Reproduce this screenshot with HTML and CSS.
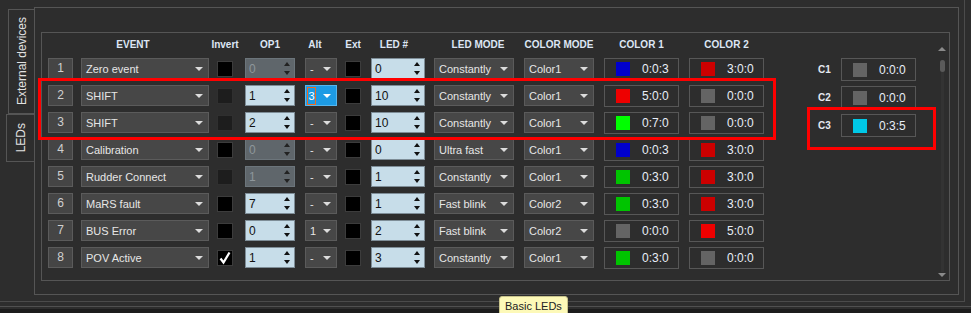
FILE: index.html
```html
<!DOCTYPE html>
<html lang="en">
<head>
    <meta charset="UTF-8">
    <meta name="viewport" content="width=device-width, initial-scale=1.0">
    <title>LEDs</title>
    <link rel="stylesheet" href="styles.css">
</head>
<body>
<div class="app">
    <div class="frame">
        <div class="tabs">
            <div class="tab tab-ext"><span>External devices</span></div>
            <div class="tab tab-leds"><span>LEDs</span></div>
        </div>

        <div class="panel">
            <div class="inner">
                <div class="table">
                    <div class="head">
                        <div class="c-num"></div>
                        <div class="c-event h-event">EVENT</div>
                        <div class="c-inv h-wide">Invert</div>
                        <div class="c-op">OP1</div>
                        <div class="c-alt h-alt">Alt</div>
                        <div class="c-ext">Ext</div>
                        <div class="c-led h-led">LED #</div>
                        <div class="c-mode h-mode">LED MODE</div>
                        <div class="c-cmode h-wide">COLOR MODE</div>
                        <div class="c-col">COLOR 1</div>
                        <div class="c-col">COLOR 2</div>
                    </div>

                    <div class="rows">
                        <div class="row">
                            <div class="c-num num">1</div>
                            <div class="c-event combo">Zero event<i></i></div>
                            <div class="c-inv"><div class="check"></div></div>
                            <div class="c-op spin off">0<b><i></i><i></i></b></div>
                            <div class="c-alt combo">-<i></i></div>
                            <div class="c-ext"><div class="check"></div></div>
                            <div class="c-led spin">0<b><i></i><i></i></b></div>
                            <div class="c-mode combo">Constantly<i></i></div>
                            <div class="c-cmode combo">Color1<i></i></div>
                            <div class="c-col colbox"><span class="sw blue"></span>0:0:3</div>
                            <div class="c-col colbox"><span class="sw red"></span>3:0:0</div>
                        </div>
                        <div class="row">
                            <div class="c-num num">2</div>
                            <div class="c-event combo">SHIFT<i></i></div>
                            <div class="c-inv"><div class="check dis"></div></div>
                            <div class="c-op spin">1<b><i></i><i></i></b></div>
                            <div class="c-alt combo hot"><em>3</em><i></i></div>
                            <div class="c-ext"><div class="check"></div></div>
                            <div class="c-led spin">10<b><i></i><i></i></b></div>
                            <div class="c-mode combo">Constantly<i></i></div>
                            <div class="c-cmode combo">Color1<i></i></div>
                            <div class="c-col colbox"><span class="sw red-hi"></span>5:0:0</div>
                            <div class="c-col colbox"><span class="sw gray"></span>0:0:0</div>
                        </div>
                        <div class="row">
                            <div class="c-num num">3</div>
                            <div class="c-event combo">SHIFT<i></i></div>
                            <div class="c-inv"><div class="check dis"></div></div>
                            <div class="c-op spin">2<b><i></i><i></i></b></div>
                            <div class="c-alt combo">-<i></i></div>
                            <div class="c-ext"><div class="check"></div></div>
                            <div class="c-led spin">10<b><i></i><i></i></b></div>
                            <div class="c-mode combo">Constantly<i></i></div>
                            <div class="c-cmode combo">Color1<i></i></div>
                            <div class="c-col colbox"><span class="sw green-hi"></span>0:7:0</div>
                            <div class="c-col colbox"><span class="sw gray"></span>0:0:0</div>
                        </div>
                        <div class="row">
                            <div class="c-num num">4</div>
                            <div class="c-event combo">Calibration<i></i></div>
                            <div class="c-inv"><div class="check"></div></div>
                            <div class="c-op spin off">0<b><i></i><i></i></b></div>
                            <div class="c-alt combo">-<i></i></div>
                            <div class="c-ext"><div class="check"></div></div>
                            <div class="c-led spin">0<b><i></i><i></i></b></div>
                            <div class="c-mode combo">Ultra fast<i></i></div>
                            <div class="c-cmode combo">Color1<i></i></div>
                            <div class="c-col colbox"><span class="sw blue"></span>0:0:3</div>
                            <div class="c-col colbox"><span class="sw red"></span>3:0:0</div>
                        </div>
                        <div class="row">
                            <div class="c-num num">5</div>
                            <div class="c-event combo">Rudder Connect<i></i></div>
                            <div class="c-inv"><div class="check dis"></div></div>
                            <div class="c-op spin off">1<b><i></i><i></i></b></div>
                            <div class="c-alt combo">-<i></i></div>
                            <div class="c-ext"><div class="check"></div></div>
                            <div class="c-led spin">1<b><i></i><i></i></b></div>
                            <div class="c-mode combo">Constantly<i></i></div>
                            <div class="c-cmode combo">Color1<i></i></div>
                            <div class="c-col colbox"><span class="sw green"></span>0:3:0</div>
                            <div class="c-col colbox"><span class="sw red"></span>3:0:0</div>
                        </div>
                        <div class="row">
                            <div class="c-num num">6</div>
                            <div class="c-event combo">MaRS fault<i></i></div>
                            <div class="c-inv"><div class="check"></div></div>
                            <div class="c-op spin">7<b><i></i><i></i></b></div>
                            <div class="c-alt combo">-<i></i></div>
                            <div class="c-ext"><div class="check"></div></div>
                            <div class="c-led spin">1<b><i></i><i></i></b></div>
                            <div class="c-mode combo">Fast blink<i></i></div>
                            <div class="c-cmode combo">Color2<i></i></div>
                            <div class="c-col colbox"><span class="sw green"></span>0:3:0</div>
                            <div class="c-col colbox"><span class="sw red"></span>3:0:0</div>
                        </div>
                        <div class="row">
                            <div class="c-num num">7</div>
                            <div class="c-event combo">BUS Error<i></i></div>
                            <div class="c-inv"><div class="check"></div></div>
                            <div class="c-op spin">0<b><i></i><i></i></b></div>
                            <div class="c-alt combo">1<i></i></div>
                            <div class="c-ext"><div class="check"></div></div>
                            <div class="c-led spin">2<b><i></i><i></i></b></div>
                            <div class="c-mode combo">Fast blink<i></i></div>
                            <div class="c-cmode combo">Color2<i></i></div>
                            <div class="c-col colbox"><span class="sw gray"></span>0:0:0</div>
                            <div class="c-col colbox"><span class="sw red-hi"></span>5:0:0</div>
                        </div>
                        <div class="row">
                            <div class="c-num num">8</div>
                            <div class="c-event combo">POV Active<i></i></div>
                            <div class="c-inv">
                                <div class="check">
                                    <svg width="14" height="14" viewBox="0 0 14 14"><path d="M2.5 7.5 L5.5 11.5 L11.5 1.5" fill="none" stroke="#fff" stroke-width="2.2"/></svg>
                                </div>
                            </div>
                            <div class="c-op spin">1<b><i></i><i></i></b></div>
                            <div class="c-alt combo">-<i></i></div>
                            <div class="c-ext"><div class="check"></div></div>
                            <div class="c-led spin">3<b><i></i><i></i></b></div>
                            <div class="c-mode combo">Constantly<i></i></div>
                            <div class="c-cmode combo">Color1<i></i></div>
                            <div class="c-col colbox"><span class="sw green"></span>0:3:0</div>
                            <div class="c-col colbox"><span class="sw gray"></span>0:0:0</div>
                        </div>
                    </div>
                </div>

                <div class="side">
                    <div class="side-row"><span class="side-label">C1</span><div class="colbox side-box"><span class="sw gray"></span>0:0:0</div></div>
                    <div class="side-row"><span class="side-label">C2</span><div class="colbox side-box"><span class="sw gray"></span>0:0:0</div></div>
                    <div class="side-row"><span class="side-label">C3</span><div class="colbox side-box"><span class="sw cyan"></span>0:3:5</div></div>
                </div>

                <div class="scroll">
                    <i class="arrow-up"></i>
                    <div class="track"><div class="thumb"></div></div>
                    <i class="arrow-down"></i>
                </div>
            </div>
        </div>
    </div>
    <div class="strip"></div>
    <div class="statusbar"></div>

    <div class="mark mark-rows"></div>
    <div class="mark mark-c3"></div>
    <div class="tooltip">Basic LEDs</div>
</div>
</body>
</html>
```

FILE: styles.css
```css
body{
    margin:0;
    background-color:#2d2d2d;
    font-family:"Liberation Sans", Arial, sans-serif;
    font-size:11px;
    color:#e6e6e6;
    overflow:hidden;
}
.app{
    position:relative;
    width:971px;
    height:313px;
    overflow:hidden;
}
.frame{
    display:flex;
    box-sizing:border-box;
    width:965px;
    height:302px;
    border-right:1px solid #4b4b4b;
    border-bottom:1px solid #4b4b4b;
}
.strip{
    box-sizing:border-box;
    margin-top:4px;
    height:3px;
    border-top:1px solid #505050;
}
.statusbar{
    height:4px;
    background-color:#1c1c1c;
}

/* vertical tabs */
.tabs{
    width:34px;
    display:flex;
    flex-direction:column;
    align-items:flex-end;
    padding-top:9px;
}
.tab{
    box-sizing:border-box;
    display:flex;
    align-items:center;
    justify-content:center;
    border:1px solid #555;
    border-right:none;
    color:#e2e2e2;
    font-size:12px;
}
.tab span{
    writing-mode:vertical-rl;
    transform:rotate(180deg);
}
.tab-ext{
    width:26px;
    height:105px;
}
.tab-leds{
    width:28px;
    height:48px;
}

/* panels */
.panel{
    box-sizing:border-box;
    margin-top:7px;
    width:925px;
    height:288px;
    border:1px solid #555;
    padding:24px 8px 13px 6px;
}
.inner{
    box-sizing:border-box;
    height:249px;
    border:1px solid #555;
    display:flex;
    padding:5px 3px 0 6px;
}

/* table */
.head{
    display:flex;
    height:14px;
    line-height:14px;
    font-weight:bold;
    font-size:10px;
    color:#dde6f4;
}
.head div{
    text-align:center;
    box-sizing:border-box;
}
.h-event{ padding-right:24px; }
.h-alt{ padding-right:12px; }
.h-led{ padding-right:8px; }
.h-mode{ padding-left:8px; }
.h-wide{ white-space:nowrap; display:flex; justify-content:center; }
.rows{
    margin-top:6px;
    display:flex;
    flex-direction:column;
    gap:6px;
}
.row{
    display:flex;
    align-items:center;
    height:21px;
}
.c-num{ width:25px; }
.c-event{ width:128px; margin-left:8px; }
.c-inv{ width:16px; margin-left:8px; }
.c-op{ width:50px; margin-left:12px; }
.c-alt{ width:32px; margin-left:10px; }
.c-ext{ width:16px; margin-left:8px; }
.c-led{ width:54px; margin-left:10px; }
.c-mode{ width:80px; margin-left:9px; }
.c-cmode{ width:70px; margin-left:10px; }
.c-col{ width:75px; margin-left:10px; }

.num{
    box-sizing:border-box;
    height:21px;
    line-height:19px;
    text-align:center;
    background-color:#454545;
    border:1px solid #5b5b5b;
    color:#d0d0d0;
    font-size:12px;
}
.combo{
    box-sizing:border-box;
    height:21px;
    display:flex;
    align-items:center;
    justify-content:space-between;
    padding:0 5px 0 4px;
    background-color:#474747;
    border:1px solid #5b5b5b;
    white-space:nowrap;
}
.combo i{
    width:0;
    height:0;
    border-left:4px solid transparent;
    border-right:4px solid transparent;
    border-top:4px solid #dcdcdc;
}
.combo.hot{
    background-color:#1d9be4;
    border-color:#56b6ee;
    padding-left:1px;
}
.combo.hot em{
    font-style:normal;
    color:#fff;
    border:1px solid #f06a1e;
    padding:2px 0;
    width:7px;
    text-align:center;
}
.combo.hot i{ border-top-color:#fff; }

.spin{
    box-sizing:border-box;
    height:21px;
    display:flex;
    align-items:center;
    justify-content:space-between;
    padding:0 4px 0 3px;
    background-color:#c7dde9;
    border:1px solid #7e8d97;
    color:#111;
    font-size:12px;
}
.spin b{
    display:flex;
    flex-direction:column;
    gap:5px;
}
.spin b i{
    width:0;
    height:0;
    border-left:3.5px solid transparent;
    border-right:3.5px solid transparent;
}
.spin b i:first-child{ border-bottom:4px solid #111; }
.spin b i:last-child{ border-top:4px solid #111; }
.spin.off{
    background-color:#5f666b;
    border-color:#6c757b;
    color:#8e969b;
}
.spin.off b i:first-child{ border-bottom-color:#222; }
.spin.off b i:last-child{ border-top-color:#222; }

.check{
    box-sizing:border-box;
    width:16px;
    height:16px;
    background-color:#000;
    border:1px solid #3c3c3c;
    display:flex;
    align-items:center;
    justify-content:center;
}
.check.dis{
    background-color:#1d1d1d;
    border-color:#2f2f2f;
}

.colbox{
    box-sizing:border-box;
    height:22px;
    display:flex;
    align-items:center;
    border:1px solid #575757;
    padding-left:11px;
    font-size:12px;
    color:#e8eef8;
}
.sw{
    width:14px;
    height:14px;
    margin-right:12px;
}
.blue{ background-color:#0000cc; }
.red{ background-color:#cc0000; }
.red-hi{ background-color:#ee0000; }
.green{ background-color:#00c400; }
.green-hi{ background-color:#00ff00; }
.gray{ background-color:#646464; }
.cyan{ background-color:#00c8e6; }

/* C1..C3 */
.side{
    margin-left:54px;
    padding-top:20px;
    display:flex;
    flex-direction:column;
    gap:5px;
}
.side-row{
    display:flex;
    align-items:center;
}
.side-label{
    width:23px;
    font-weight:bold;
    font-size:10px;
    color:#e4e8f0;
}
.side-box{
    width:75px;
    height:23px;
}

/* scrollbar */
.scroll{
    margin-left:auto;
    margin-top:9px;
    width:8px;
    height:230px;
    display:flex;
    flex-direction:column;
    align-items:center;
}
.arrow-up, .arrow-down{
    width:0;
    height:0;
    border-left:4px solid transparent;
    border-right:4px solid transparent;
}
.arrow-up{ border-bottom:4px solid #8a8a8a; }
.arrow-down{ border-top:4px solid #8a8a8a; }
.track{
    flex:1;
    width:3px;
    margin:9px 0 1px;
    background-color:#333;
    display:flex;
    justify-content:center;
}
.thumb{
    flex:none;
    width:5px;
    height:12px;
    border-radius:3px;
    background-color:#5a5a5a;
}

/* annotations */
.mark{
    position:absolute;
    box-sizing:border-box;
    border:3px solid #ff0000;
}
.mark-rows{
    left:38px;
    top:78px;
    width:738px;
    height:62px;
}
.mark-c3{
    left:807px;
    top:107px;
    width:129px;
    height:43px;
}
.tooltip{
    position:absolute;
    left:499px;
    top:296px;
    box-sizing:border-box;
    height:20px;
    padding:3px 5px 0 5px;
    white-space:nowrap;
    background-color:#fdf9b8;
    border:1px solid #c9c48c;
    border-radius:3px;
    color:#222;
    font-size:11px;
}
```
